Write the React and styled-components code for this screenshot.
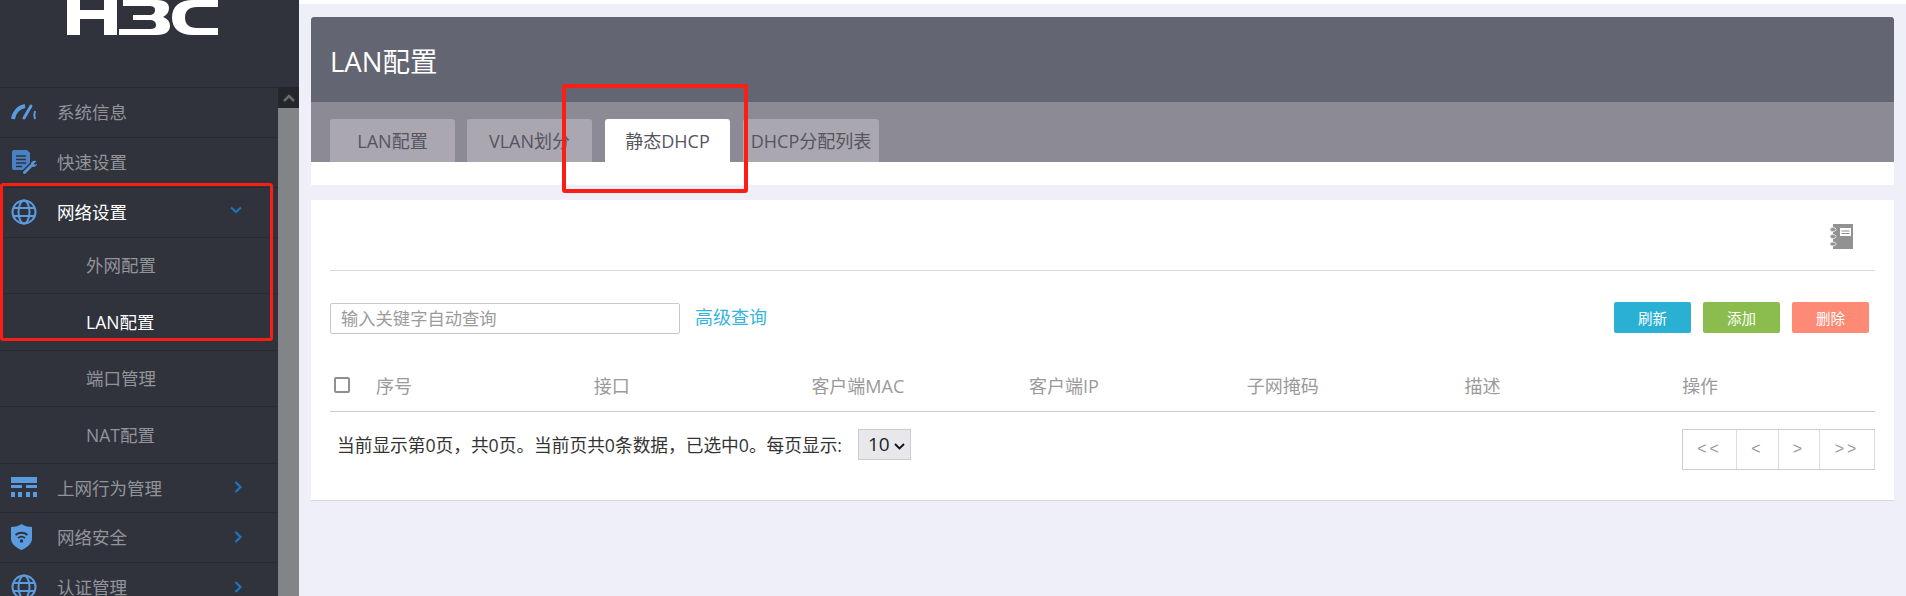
import React from "react";
import styled, { createGlobalStyle } from "styled-components";

const FONT = `"Open Sans", "Noto Sans CJK SC", sans-serif`;

const CHEVRON = encodeURIComponent(
  `<svg xmlns="http://www.w3.org/2000/svg" width="11" height="7" viewBox="0 0 11 7"><path d="M1 1 L5.500 5.500 L10 1" fill="none" stroke="#111" stroke-width="1.800"/></svg>`
);

const GlobalStyle = createGlobalStyle`
  html, body {
    margin: 0;
    padding: 0;
    height: 596px;
    overflow: hidden;
    background: #eeeff8;
    font-family: ${FONT};
  }
  * { box-sizing: border-box; }
`;

const Page = styled.div`
  position: relative;
  display: flex;
  width: 1906px;
  height: 596px;
  overflow: hidden;
`;

const Sidebar = styled.aside`
  flex: 0 0 299px;
  height: 596px;
  background: #30333c;
  overflow: hidden;
`;

const LogoBox = styled.div`
  height: 87px;
  padding-left: 67px;
`;

const SideBody = styled.div`
  display: flex;
  height: 509px;
`;

const Menu = styled.ul`
  flex: 0 0 278px;
  margin: 0;
  padding: 0;
  list-style: none;
`;

const MenuRow = styled.li`
  display: flex;
  align-items: center;
  height: ${(p) => p.$h}px;
  padding-left: ${(p) => (p.$sub ? 86 : 11)}px;
  padding-bottom: 2px;
  border-top: 1px solid #282b33;
  font-size: 17.5px;
  color: ${(p) => (p.$active ? "#ffffff" : "#92949a")};
`;

const MenuIcon = styled.span`
  flex: 0 0 46px;
  display: flex;
  align-items: center;
  height: 26px;
`;

const MenuLabel = styled.span`
  flex: 1;
  white-space: nowrap;
`;

const Caret = styled.span`
  flex: 0 0 48px;
  display: flex;
  align-items: center;
  padding-left: ${(p) => p.$pad}px;
  margin-top: ${(p) => p.$top}px;
  color: #1f74c4;
`;

const ScrollBar = styled.div`
  flex: 0 0 21px;
  background: #838488;
`;

const ScrollUp = styled.div`
  display: flex;
  align-items: center;
  justify-content: center;
  height: 21px;
  background: #24262c;
`;

const Main = styled.main`
  flex: 1;
  min-width: 0;
  padding: 13px 12px 0 12px;
  border-top: 4px solid #ffffff;
`;

const TopCard = styled.section`
  height: 168px;
  background: #ffffff;
`;

const TitleBar = styled.div`
  display: flex;
  align-items: center;
  height: 85px;
  padding-left: 19px;
  background: #636572;
  border-radius: 3px 3px 0 0;
  font-size: 27.5px;
  color: #ffffff;
`;

const TabBand = styled.div`
  display: flex;
  align-items: flex-end;
  height: 60px;
  padding-left: 19px;
  background: #8c8a95;
`;

const Tab = styled.div`
  display: flex;
  align-items: center;
  justify-content: center;
  width: ${(p) => p.$w}px;
  height: 43px;
  margin-right: ${(p) => p.$gap}px;
  padding-bottom: 2px;
  border-radius: 3px 3px 0 0;
  background: ${(p) => (p.$active ? "#ffffff" : "#aaa7b1")};
  color: #555560;
  font-size: 18px;
  white-space: nowrap;
`;

const ListCard = styled.section`
  height: 301px;
  margin-top: 15px;
  padding: 0 19px;
  background: #ffffff;
  border-bottom: 1px solid #d8d8dc;
`;

const BookRow = styled.div`
  display: flex;
  justify-content: flex-end;
  align-items: center;
  height: 71px;
  padding-top: 2px;
  padding-right: 22px;
  border-bottom: 1px solid #d8d8d8;
`;

const ToolRow = styled.div`
  display: flex;
  align-items: center;
  height: 94px;
`;

const SearchInput = styled.input`
  width: 350px;
  height: 31px;
  padding: 0 10px;
  border: 1px solid #c8c8c8;
  border-radius: 2px;
  outline: none;
  font-family: ${FONT};
  font-size: 17.3px;
  color: #555;
  &::placeholder { color: #9b9b9b; }
`;

const AdvancedLink = styled.a`
  margin-left: 15px;
  margin-top: -5px;
  font-size: 18px;
  color: #34b4dc;
`;

const Actions = styled.div`
  display: flex;
  gap: 12px;
  margin-left: auto;
  padding-right: 6px;
  margin-top: -1px;
`;

const ActionButton = styled.button`
  width: 77px;
  height: 31px;
  padding: 0;
  border: none;
  border-radius: 2px;
  background: ${(p) => p.$color};
  color: #ffffff;
  font-family: ${FONT};
  font-size: 14.5px;
`;

const HeadRow = styled.div`
  display: grid;
  grid-template-columns: 46px repeat(6, 217.7px) 1fr;
  align-items: center;
  height: 47px;
  padding-bottom: 7px;
  border-bottom: 1px solid #cccccc;
  font-size: 18px;
  color: #9a9a9a;
`;

const CheckBox = styled.span`
  display: block;
  width: 16px;
  height: 16px;
  margin-left: 4px;
  border: 2px solid #8f8f9c;
  border-radius: 2px;
`;

const FootRow = styled.div`
  display: flex;
  align-items: center;
  height: 64px;
  padding-left: 7px;
  font-size: 17.7px;
  color: #333333;
  white-space: nowrap;
`;

const PageSelect = styled.select`
  appearance: none;
  width: 53px;
  height: 31px;
  margin-left: 16px;
  padding: 0 0 0 9px;
  border: 1px solid #cccccc;
  border-radius: 0;
  background: #e8e8ec url("data:image/svg+xml,${CHEVRON}") no-repeat 35px 13px;
  font-family: ${FONT};
  font-size: 19px;
  color: #222;
`;

const Pager = styled.div`
  display: flex;
  margin-left: auto;
  height: 41px;
  margin-top: 10px;
  border: 1px solid #cccccc;
  border-right: none;
`;

const PagerCell = styled.span`
  display: flex;
  align-items: center;
  justify-content: center;
  width: ${(p) => p.$w}px;
  border-right: 1px solid #dddddd;
  font-family: "Liberation Sans", sans-serif;
  font-size: 16px;
  letter-spacing: 3px;
  color: #999999;
`;

// hand drawn red marks lying over the page
const RedMark = styled.div`
  position: absolute;
  left: ${(p) => p.$x}px;
  top: ${(p) => p.$y}px;
  width: ${(p) => p.$w}px;
  height: ${(p) => p.$h}px;
  border: ${(p) => p.$b}px solid #fa1e14;
  border-radius: 3px;
  pointer-events: none;
`;

const Logo = () => (
  <svg width="151" height="35" viewBox="0 0 151 35" fill="#ffffff">
    <rect x="0" y="0" width="13" height="35" />
    <rect x="37" y="0" width="13" height="35" />
    <rect x="0" y="10" width="50" height="9" />
    <path d="M56 0 H90 C99 0 102 4 102 8 C102 12 100 15 96 17 C101 19 103 22 103 26 C103 31 99 35 90 35 H52 V29 H82 C87 29 89 28 89 25 C89 22 87 20 82 20 H66 V15 H82 C86 15 88 13 88 10 C88 7 86 6 82 6 H56 Z" />
    <path d="M151 7 H130 C122 7 118 11 118 17.5 C118 24 122 28 130 28 H151 V35 H126 C112 35 105 28 105 17.5 C105 7 112 0 126 0 H151 Z" />
  </svg>
);

const GaugeIcon = () => (
  <svg width="26" height="18" viewBox="0 0 26 18" fill="none" stroke="#5b9be0">
    <path d="M2 16 C3 9 8 4 14 3" strokeWidth="4" />
    <path d="M13 15 L20 3" strokeWidth="3" strokeLinecap="round" />
    <path d="M24 8 C23 11 23 13 24 16" strokeWidth="2" />
  </svg>
);

const DocIcon = () => (
  <svg width="26" height="26" viewBox="0 0 26 26" fill="none">
    <path d="M3 1 H16 L19 4 V21 H3 C1.500 21 1 20 1 19 V3 C1 2 1.500 1 3 1 Z" fill="#4a80c4" />
    <path d="M5 7 H15 M5 10.500 H15 M5 14 H15 M5 17.500 H11" stroke="#30333c" strokeWidth="1.500" />
    <path d="M13 24 L22 15" stroke="#30333c" strokeWidth="6" />
    <path d="M13.500 23.500 L21 16" stroke="#5b93d6" strokeWidth="3" strokeLinecap="round" />
    <path d="M20 15 C20 12 23 11 25.500 12 L23 14.500 L24 16 L26 14.500 C26 17.500 23 18.500 21 17.500 Z" fill="#5b93d6" />
  </svg>
);

const GlobeIcon = () => (
  <svg width="26" height="26" viewBox="0 0 26 26" fill="none" stroke="#5b9be0" strokeWidth="2">
    <circle cx="13" cy="13" r="11.500" />
    <ellipse cx="13" cy="13" rx="5.500" ry="11.500" />
    <path d="M2.500 9 H23.500 M2.500 17 H23.500" />
  </svg>
);

const TableIcon = () => (
  <svg width="26" height="20" viewBox="0 0 26 20" fill="#5b9be0">
    <rect x="0" y="0" width="26" height="6" />
    <rect x="0" y="8" width="11" height="3" />
    <rect x="15" y="8" width="11" height="3" />
    <rect x="0" y="15" width="4" height="5" />
    <rect x="7" y="15" width="4" height="5" />
    <rect x="15" y="15" width="4" height="5" />
    <rect x="22" y="15" width="4" height="5" />
  </svg>
);

const ShieldIcon = () => (
  <svg width="21" height="26" viewBox="0 0 21 26">
    <path d="M10.500 0 C13 2 17 3 21 3 V15 C21 20 15 24 10.500 26 C6 24 0 20 0 15 V3 C4 3 8 2 10.500 0 Z" fill="#5b9be0" />
    <path d="M4.500 11 C8 8 13 8 16.500 11 M7 14 C9 12.500 12 12.500 14 14" fill="none" stroke="#30333c" strokeWidth="1.800" />
    <circle cx="10.500" cy="17" r="1.700" fill="#30333c" />
  </svg>
);

const CaretDown = () => (
  <svg width="12" height="8" viewBox="0 0 12 8" fill="none" stroke="currentColor" strokeWidth="2">
    <path d="M1 1.500 L6 6 L11 1.500" />
  </svg>
);

const CaretRight = () => (
  <svg width="8" height="12" viewBox="0 0 8 12" fill="none" stroke="currentColor" strokeWidth="2.200">
    <path d="M1.500 1 L6.500 6 L1.500 11" />
  </svg>
);

const BookIcon = () => (
  <svg width="23" height="25" viewBox="0 0 23 25">
    <rect x="3" y="0" width="20" height="25" fill="#929292" />
    <rect x="10" y="4" width="11" height="8" fill="#ffffff" />
    <path d="M11.500 7 H19.500 M11.500 9.500 H19.500" stroke="#929292" />
    <ellipse cx="3" cy="5.500" rx="3" ry="2" fill="#929292" stroke="#e0e0e0" />
    <ellipse cx="3" cy="12.500" rx="3" ry="2" fill="#929292" stroke="#e0e0e0" />
    <ellipse cx="3" cy="20" rx="3" ry="2" fill="#929292" stroke="#e0e0e0" />
  </svg>
);

const menu = [
  { label: "系统信息", h: 50, icon: <GaugeIcon /> },
  { label: "快速设置", h: 50, icon: <DocIcon /> },
  { label: "网络设置", h: 50, icon: <GlobeIcon />, active: true, caret: <CaretDown />, pad: 0, top: -3 },
  { label: "外网配置", h: 56, sub: true },
  { label: "LAN配置", h: 57, sub: true, active: true },
  { label: "端口管理", h: 56, sub: true },
  { label: "NAT配置", h: 57, sub: true },
  { label: "上网行为管理", h: 49, icon: <TableIcon />, caret: <CaretRight />, pad: 4, top: 0 },
  { label: "网络安全", h: 50, icon: <ShieldIcon />, caret: <CaretRight />, pad: 4, top: 0 },
  { label: "认证管理", h: 50, icon: <GlobeIcon />, caret: <CaretRight />, pad: 4, top: 0 },
];

const tabs = [
  { label: "LAN配置", w: 125, gap: 12 },
  { label: "VLAN划分", w: 125, gap: 13 },
  { label: "静态DHCP", w: 125, gap: 13, active: true },
  { label: "DHCP分配列表", w: 136, gap: 0 },
];

const columns = ["序号", "接口", "客户端MAC", "客户端IP", "子网掩码", "描述", "操作"];

const pager = [
  { label: "<<", w: 54 },
  { label: "<", w: 42 },
  { label: ">", w: 41 },
  { label: ">>", w: 55 },
];

export default function App() {
  return (
    <Page>
      <GlobalStyle />
      <Sidebar>
        <LogoBox>
          <Logo />
        </LogoBox>
        <SideBody>
          <Menu>
            {menu.map((item) => (
              <MenuRow key={item.label} $h={item.h} $sub={item.sub} $active={item.active}>
                {item.icon && <MenuIcon>{item.icon}</MenuIcon>}
                <MenuLabel>{item.label}</MenuLabel>
                {item.caret && (
                  <Caret $pad={item.pad} $top={item.top}>
                    {item.caret}
                  </Caret>
                )}
              </MenuRow>
            ))}
          </Menu>
          <ScrollBar>
            <ScrollUp>
              <svg width="12" height="8" viewBox="0 0 12 8" fill="none" stroke="#6a6b70" strokeWidth="2.500">
                <path d="M1 7 L6 2 L11 7" />
              </svg>
            </ScrollUp>
          </ScrollBar>
        </SideBody>
      </Sidebar>
      <Main>
        <TopCard>
          <TitleBar>LAN配置</TitleBar>
          <TabBand>
            {tabs.map((tab) => (
              <Tab key={tab.label} $w={tab.w} $gap={tab.gap} $active={tab.active}>
                {tab.label}
              </Tab>
            ))}
          </TabBand>
        </TopCard>
        <ListCard>
          <BookRow>
            <BookIcon />
          </BookRow>
          <ToolRow>
            <SearchInput placeholder="输入关键字自动查询" readOnly />
            <AdvancedLink>高级查询</AdvancedLink>
            <Actions>
              <ActionButton $color="#29b0d2">刷新</ActionButton>
              <ActionButton $color="#8abd4e">添加</ActionButton>
              <ActionButton $color="#fc8a74">删除</ActionButton>
            </Actions>
          </ToolRow>
          <HeadRow>
            <CheckBox />
            {columns.map((name) => (
              <span key={name}>{name}</span>
            ))}
          </HeadRow>
          <FootRow>
            当前显示第0页，共0页。当前页共0条数据，已选中0。每页显示:
            <PageSelect defaultValue="10">
              <option value="10">10</option>
            </PageSelect>
            <Pager>
              {pager.map((cell) => (
                <PagerCell key={cell.label} $w={cell.w}>
                  {cell.label}
                </PagerCell>
              ))}
            </Pager>
          </FootRow>
        </ListCard>
      </Main>
      <RedMark $x={0} $y={183} $w={273} $h={158} $b={3.5} />
      <RedMark $x={562} $y={84} $w={186} $h={109} $b={4} />
    </Page>
  );
}
